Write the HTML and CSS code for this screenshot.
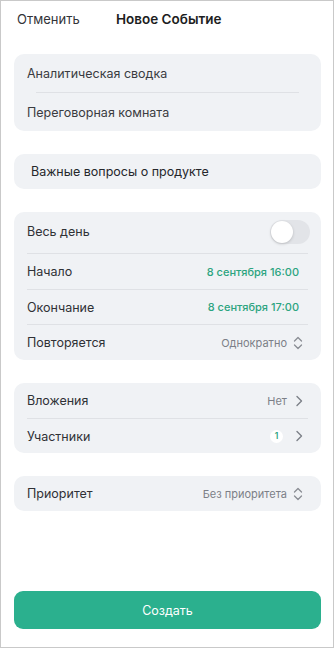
FILE: index.html
```html
<!DOCTYPE html>
<html lang="ru">
<head>
<meta charset="utf-8">
<link rel="stylesheet" href="styles.css">
</head>
<body>
<div class="frame">
  <header class="header">
    <span class="cancel">Отменить</span>
    <span class="title">Новое Событие</span>
  </header>
  <div class="content">
    <section class="card card-inputs">
      <div class="row row-input">Аналитическая сводка</div>
      <div class="divider divider-wide"></div>
      <div class="row row-input">Переговорная комната</div>
    </section>
    <section class="card card-single">
      <div class="row row-note">Важные вопросы о продукте</div>
    </section>
    <section class="card">
      <div class="row row-toggle">
        <span class="label">Весь день</span>
        <span class="toggle"><span class="knob"></span></span>
      </div>
      <div class="divider"></div>
      <div class="row">
        <span class="label">Начало</span>
        <span class="value green">8 сентября 16:00</span>
      </div>
      <div class="divider"></div>
      <div class="row row-short">
        <span class="label">Окончание</span>
        <span class="value green">8 сентября 17:00</span>
      </div>
      <div class="divider"></div>
      <div class="row">
        <span class="label">Повторяется</span>
        <span class="value-wrap">
          <span class="value gray">Однократно</span>
          <svg class="updown" width="10" height="14" viewBox="0 0 10 14"><path d="M1.5 5 L5 1.5 L8.5 5 M1.5 9 L5 12.5 L8.5 9" fill="none" stroke="#8a8d94" stroke-width="1.3" stroke-linecap="round" stroke-linejoin="round"/></svg>
        </span>
      </div>
    </section>
    <section class="card">
      <div class="row">
        <span class="label">Вложения</span>
        <span class="value-wrap">
          <span class="value gray">Нет</span>
          <svg class="chev" width="8" height="12" viewBox="0 0 8 12"><path d="M2 1.5 L6.5 6 L2 10.5" fill="none" stroke="#7d8088" stroke-width="1.4" stroke-linecap="round" stroke-linejoin="round"/></svg>
        </span>
      </div>
      <div class="divider"></div>
      <div class="row row-short">
        <span class="label">Участники</span>
        <span class="value-wrap">
          <span class="badge">1</span>
          <svg class="chev" width="8" height="12" viewBox="0 0 8 12"><path d="M2 1.5 L6.5 6 L2 10.5" fill="none" stroke="#7d8088" stroke-width="1.4" stroke-linecap="round" stroke-linejoin="round"/></svg>
        </span>
      </div>
    </section>
    <section class="card card-single">
      <div class="row">
        <span class="label">Приоритет</span>
        <span class="value-wrap">
          <span class="value gray">Без приоритета</span>
          <svg class="updown" width="10" height="14" viewBox="0 0 10 14"><path d="M1.5 5 L5 1.5 L8.5 5 M1.5 9 L5 12.5 L8.5 9" fill="none" stroke="#8a8d94" stroke-width="1.3" stroke-linecap="round" stroke-linejoin="round"/></svg>
        </span>
      </div>
    </section>
  </div>
  <button class="create">Создать</button>
</div>
</body>
</html>
```

FILE: styles.css
```css
* { box-sizing: border-box; }
html, body { margin: 0; padding: 0; background: #fff; }
body {
  font-family: Inter, "Noto Sans", sans-serif;
  color: #2a2c31;
  width: 335px;
  height: 649px;
}
.frame {
  width: 334px;
  height: 648px;
  border: 1px solid #c9c9c9;
  display: flex;
  flex-direction: column;
  padding: 0 12px 0 13px;
}
.header {
  height: 35px;
  display: flex;
  align-items: center;
  padding-left: 3px;
  font-size: 13px;
}
.cancel { color: #333438; width: 99px; }
.title { font-weight: 600; font-size: 13.5px; color: #1c1d21; }
.content {
  margin-top: 18px;
  display: flex;
  flex-direction: column;
  gap: 23px;
}
.card {
  background: #f0f2f5;
  border-radius: 10px;
  display: flex;
  flex-direction: column;
}
.row {
  height: 35px;
  display: flex;
  align-items: center;
  justify-content: space-between;
  padding: 0 12px 0 13px;
  font-size: 12.5px;
  color: #2f3136;
}
.row-short { height: 34px; }
.card-inputs .row-input { height: 38px; color: #3a3c41; }
.card-single .row { height: 35px; }
.row-note { padding-left: 17px; color: #25272b; }
.row-toggle { height: 41px; padding-bottom: 2px; }
.divider {
  height: 1px;
  background: #dfe1e5;
  margin: 0 13px;
}
.divider-wide { margin: 0 22px; }
.value { font-size: 11px; }
.green { color: #2ca480; font-weight: 500; margin-right: 10px; }
.gray { color: #7c7f87; }
.value-wrap { display: flex; align-items: center; gap: 6px; margin-right: 6px; }
.toggle {
  width: 40px;
  height: 24px;
  border-radius: 12px;
  background: #e2e4e8;
  position: relative;
  margin-right: -1px;
}
.knob {
  position: absolute;
  left: 1px;
  top: 1px;
  width: 22px;
  height: 22px;
  border-radius: 50%;
  background: #fff;
  box-shadow: 0 1px 3px rgba(0,0,0,0.18);
}
.badge {
  width: 13px;
  height: 13px;
  border-radius: 50%;
  background: #fff;
  color: #2ca480;
  font-size: 8.5px;
  font-weight: 600;
  display: flex;
  align-items: center;
  justify-content: center;
  margin-right: 4px;
}
.chev { margin-left: 2px; }
.create {
  margin-top: auto;
  margin-bottom: 18px;
  height: 38px;
  border: none;
  border-radius: 9px;
  background: #2bb08e;
  color: #fff;
  font-family: Inter, "Noto Sans", sans-serif;
  font-size: 12.5px;
  width: 100%;
}
```
